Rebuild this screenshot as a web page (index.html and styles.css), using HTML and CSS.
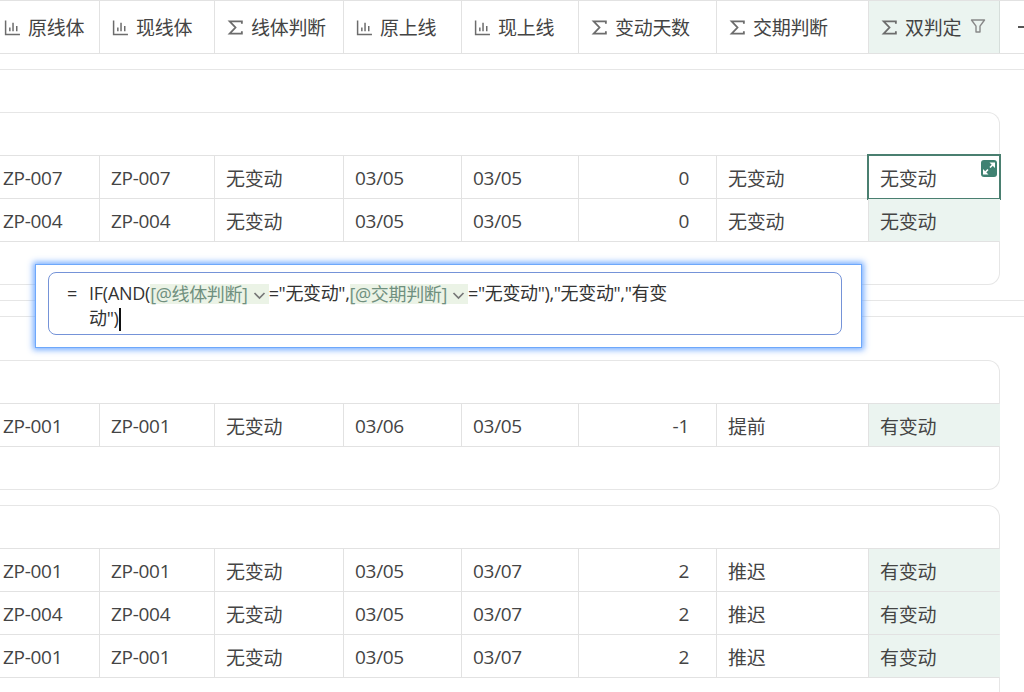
FILE: index.html
```html
<!DOCTYPE html>
<html lang="zh-CN">
<head>
  <meta charset="UTF-8">
  <title>双判定</title>
  <link rel="stylesheet" href="styles.css">
</head>
<body>
<svg class="defs">
  <symbol id="i-chart" viewBox="0 0 16 16"><path d="M1.5 1.5V14.5H15M5.5 8V11.5M8.5 3.5V11.5M12 6.5V11.5" fill="none" stroke="currentColor" stroke-width="1.4"/></symbol>
  <symbol id="i-sum" viewBox="0 0 16 16"><path d="M14 4.5V2.2H2.5L8 8 2.5 13.8H14V11.5" fill="none" stroke="currentColor" stroke-width="1.7"/></symbol>
  <symbol id="i-filter" viewBox="0 0 16 16"><path d="M1.5 2H14.5L10 8.2V14H6V8.2Z" fill="none" stroke="currentColor" stroke-width="1.4" stroke-linejoin="round"/></symbol>
  <symbol id="i-down" viewBox="0 0 13 13"><path d="M1.5 4 6.5 9 11.5 4" fill="none" stroke="currentColor" stroke-width="1.7"/></symbol>
</svg>

<div class="sheet">
  <!-- 表头 -->
  <div class="head row">
    <div class="cell"><svg class="ico"><use href="#i-chart"/></svg>原线体</div>
    <div class="cell"><svg class="ico"><use href="#i-chart"/></svg>现线体</div>
    <div class="cell"><svg class="ico"><use href="#i-sum"/></svg>线体判断</div>
    <div class="cell"><svg class="ico"><use href="#i-chart"/></svg>原上线</div>
    <div class="cell"><svg class="ico"><use href="#i-chart"/></svg>现上线</div>
    <div class="cell"><svg class="ico"><use href="#i-sum"/></svg>变动天数</div>
    <div class="cell"><svg class="ico"><use href="#i-sum"/></svg>交期判断</div>
    <div class="cell hl"><svg class="ico"><use href="#i-sum"/></svg>双判定<svg class="ico-filter"><use href="#i-filter"/></svg></div>
    <div class="add"><span class="plus"></span></div>
  </div>

  <div class="divider first"></div>

  <div class="card">
    <div class="row">
      <div class="cell">ZP-007</div><div class="cell">ZP-007</div><div class="cell">无变动</div><div class="cell">03/05</div><div class="cell">03/05</div><div class="cell num">0</div><div class="cell">无变动</div>
      <div class="cell selected">无变动
        <span class="expand"><svg viewBox="0 0 16 16"><path d="M8.5 2H14V7.5ZM7.5 14H2V8.5Z" fill="#fff"/><path d="M11.5 4.5 9 7M4.5 11.5 7 9" fill="none" stroke="#fff" stroke-width="1.7"/></svg></span>
      </div>
    </div>
    <div class="row">
      <div class="cell">ZP-004</div><div class="cell">ZP-004</div><div class="cell">无变动</div><div class="cell">03/05</div><div class="cell">03/05</div><div class="cell num">0</div><div class="cell">无变动</div><div class="cell hl">无变动</div>
    </div>
    <div class="row-end"></div>
  </div>

  <div class="divider mid"></div>
  <div class="divider low"></div>

  <div class="card">
    <div class="row">
      <div class="cell">ZP-001</div><div class="cell">ZP-001</div><div class="cell">无变动</div><div class="cell">03/06</div><div class="cell">03/05</div><div class="cell num">-1</div><div class="cell">提前</div><div class="cell hl">有变动</div>
    </div>
    <div class="row-end"></div>
  </div>

  <div class="card next">
    <div class="row">
      <div class="cell">ZP-001</div><div class="cell">ZP-001</div><div class="cell">无变动</div><div class="cell">03/05</div><div class="cell">03/07</div><div class="cell num">2</div><div class="cell">推迟</div><div class="cell hl">有变动</div>
    </div>
    <div class="row">
      <div class="cell">ZP-004</div><div class="cell">ZP-004</div><div class="cell">无变动</div><div class="cell">03/05</div><div class="cell">03/07</div><div class="cell num">2</div><div class="cell">推迟</div><div class="cell hl">有变动</div>
    </div>
    <div class="row">
      <div class="cell">ZP-001</div><div class="cell">ZP-001</div><div class="cell">无变动</div><div class="cell">03/05</div><div class="cell">03/07</div><div class="cell num">2</div><div class="cell">推迟</div><div class="cell hl">有变动</div>
    </div>
    <div class="row-end"></div>
  </div>
</div>

<!-- 公式编辑框 -->
<div class="formula-pop">
  <div class="formula-box">
    <span class="eq">=</span>
    <div class="formula"><span class="fn">IF(AND(</span><span class="chip">[@线体判断]<svg class="chev"><use href="#i-down"/></svg></span><span>="无变动",</span><span class="chip">[@交期判断]<svg class="chev"><use href="#i-down"/></svg></span><span>="无变动"),"无变动","有变</span><br><span>动")</span><span class="caret"></span></div>
  </div>
</div>
</body>
</html>
```

FILE: styles.css
```css
html, body {
  margin: 0;
  height: 100%;
  overflow: hidden;
  background: #fff;
}

body {
  position: relative;
  font-family: "Open Sans", "Noto Sans CJK SC", sans-serif;
  font-size: 19px;
  letter-spacing: -0.3px;
  color: #444;
}

.defs {
  display: none;
}

/* 表格整体往左滚动了一点 */
.sheet {
  margin-left: -8px;
  width: 1040px;
}

.row {
  display: grid;
  grid-template-columns: 108px 115px 129px 118px 117px 138px 152px 131px;
  height: 43px;
  border-top: 1px solid #e2e2e2;
  box-sizing: border-box;
}

.cell {
  display: flex;
  align-items: center;
  padding: 2px 11px 0;
  border-right: 1px solid #e2e2e2;
  box-sizing: border-box;
  white-space: nowrap;
  position: relative;
}

.num {
  justify-content: flex-end;
  padding-right: 27px;
}

.hl {
  background: #ebf4f0;
}

/* 表头 */
.head {
  height: 54px;
  border-bottom: 1px solid #e2e2e2;
  grid-template-columns: 108px 115px 129px 118px 117px 138px 152px 131px 60px;
}

.head .cell {
  padding-top: 0;
}

.head .hl {
  border-right-color: #d6dedb;
}

.ico {
  width: 17px;
  height: 17px;
  margin-right: 8px;
  margin-left: 1px;
  color: #6c6c6c;
  flex: none;
}

.head .ico {
  margin-right: 7px;
}

.ico-filter {
  width: 16px;
  height: 16px;
  margin-left: 9px;
  margin-bottom: 2px;
  color: #888;
}

.add {
  display: flex;
  align-items: center;
  padding-left: 18px;
}

.plus {
  display: block;
  width: 12px;
  height: 2px;
  background: #555;
}

/* 分隔线 */
.divider {
  border-top: 1px solid #e6e6e6;
}

.divider.first {
  margin-top: 15px;
  margin-bottom: 42px;
}

.divider.mid {
  margin-top: 15px;
}

.divider.low {
  margin-top: 15px;
  margin-bottom: 43px;
}

/* 分组卡片 */
.card {
  width: 1008px;
  box-sizing: border-box;
  border: 1px solid #e6e6e6;
  border-left: 0;
  border-radius: 0 12px 12px 0;
  padding-top: 42px;
}

.card .cell:nth-child(8) {
  border-right: 0;
}

.card.next {
  margin-top: 15px;
}

.row-end {
  height: 43px;
  border-top: 1px solid #e2e2e2;
  box-sizing: border-box;
}

.selected::after {
  content: "";
  position: absolute;
  top: -2px;
  right: -1px;
  bottom: -2px;
  left: -2px;
  border: 2px solid #4a7f70;
}

.expand {
  position: absolute;
  top: 4px;
  right: 3px;
  width: 16px;
  height: 17px;
  border-radius: 3px;
  background: #3f8272;
  z-index: 1;
}

.expand svg {
  display: block;
  width: 16px;
  height: 17px;
}

/* 公式编辑框 */
.formula-pop {
  position: absolute;
  left: 36px;
  top: 265px;
  width: 825px;
  height: 82px;
  box-sizing: border-box;
  padding: 7px 19px 12px 12px;
  background: #fff;
  box-shadow: 0 0 0 1px #6ea8fb, 0 0 6px 3px rgba(105, 165, 255, 0.9);
}

.formula-box {
  height: 63px;
  box-sizing: border-box;
  display: flex;
  border: 1px solid #7593d8;
  border-radius: 8px;
  padding: 8px 0 0 18px;
  color: #333;
  font-size: 18px;
  line-height: 25px;
  letter-spacing: -0.35px;
}

.eq {
  width: 22px;
  flex: none;
}

.formula {
  white-space: nowrap;
}

.fn {
  letter-spacing: -0.25px;
}

.chip {
  display: inline-block;
  height: 20px;
  line-height: 20px;
  background: #ebf3e6;
  color: #70907f;
  vertical-align: -1px;
}

.chev {
  width: 13px;
  height: 13px;
  margin: 0 3px 0 5px;
  color: #777;
  vertical-align: -1px;
}

.caret {
  display: inline-block;
  width: 2px;
  height: 23px;
  margin-left: 1px;
  background: #111;
  vertical-align: -6px;
}
```
